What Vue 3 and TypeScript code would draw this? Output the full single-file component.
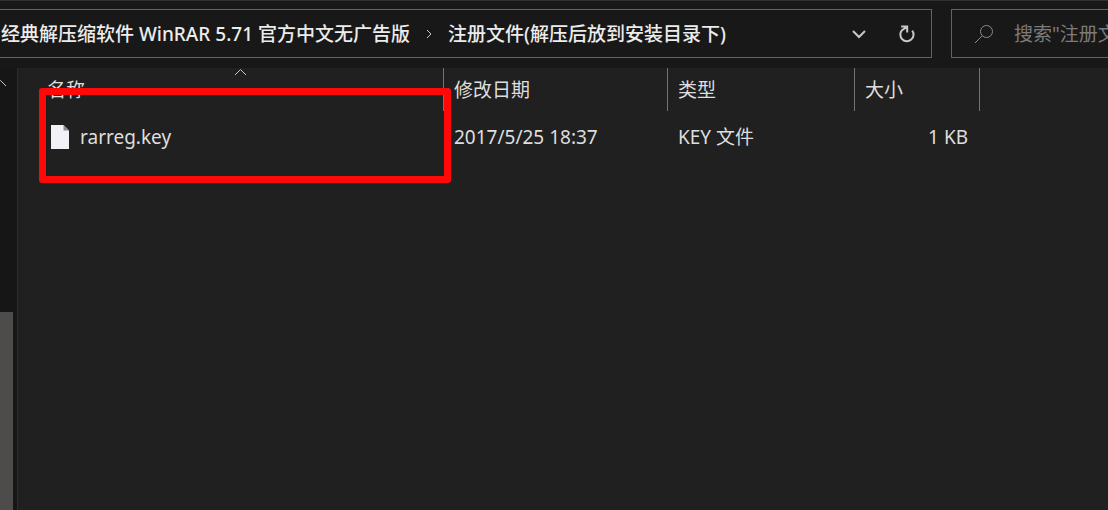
<script setup lang="ts">
import { ref } from 'vue'

interface FileEntry {
  name: string
  modified: string
  kind: string
  size: string
}

const crumbs = ['经典解压缩软件 WinRAR 5.71 官方中文无广告版', '注册文件(解压后放到安装目录下)']
const query = ref('')
const files: FileEntry[] = [
  { name: 'rarreg.key', modified: '2017/5/25 18:37', kind: 'KEY 文件', size: '1 KB' },
]
</script>

<template>
  <div class="explorer">
    <header class="toolbar">
      <nav class="address" aria-label="地址">
        <a class="crumb" href="#">{{ crumbs[0] }}</a>
        <svg class="crumb-sep" viewBox="0 0 8 12" aria-hidden="true"><path d="M2 2l4 4-4 4" /></svg>
        <a class="crumb" href="#">{{ crumbs[1] }}</a>
        <button class="tool history" type="button" aria-label="历史记录">
          <svg viewBox="0 0 16 10" width="16" height="10"><path d="M2 2l6 6 6-6" /></svg>
        </button>
        <button class="tool" type="button" aria-label="刷新">
          <svg viewBox="0 0 18 18" width="18" height="18">
            <path d="M14.200 5.600A6.600 6.600 0 1 1 4 5.200L8.500 2.200M3.200 1.500H9.200V7.500" />
          </svg>
        </button>
      </nav>
      <label class="search">
        <svg viewBox="0 0 20 20" width="20" height="20" aria-hidden="true">
          <circle cx="12.5" cy="7.5" r="6" /><path d="M8.2 11.8L1 19" />
        </svg>
        <input v-model="query" type="text" aria-label="搜索" placeholder="搜索&quot;注册文件(解压后放到安装目录下)&quot;">
      </label>
    </header>

    <div class="body">
      <aside class="tree">
        <button class="scroll-up" type="button" aria-label="向上滚动">
          <svg viewBox="0 0 13 8" width="13" height="8"><path d="M1 7l5.500-5.500L12 7" /></svg>
        </button>
        <div class="thumb"></div>
      </aside>
      <main class="listing">
        <table>
          <colgroup>
            <col class="c-name"><col class="c-date"><col class="c-kind"><col class="c-size"><col>
          </colgroup>
          <thead>
            <tr>
              <th class="name">
                名称
                <svg class="sort" viewBox="0 0 13 8" width="13" height="8" aria-hidden="true"><path d="M1 7l5.500-5.500L12 7" /></svg>
              </th>
              <th>修改日期</th>
              <th>类型</th>
              <th>大小</th>
              <td></td>
            </tr>
          </thead>
          <tbody>
            <tr v-for="file in files" :key="file.name">
              <td class="name">
                <span class="file">
                  <svg viewBox="0 0 18 24" width="18" height="24" aria-hidden="true">
                    <path class="sheet" d="M0 0H12.500L18 5.500V24H0Z" /><path class="fold" d="M12.500 0V5.500H18Z" />
                  </svg>
                  {{ file.name }}
                </span>
              </td>
              <td>{{ file.modified }}</td>
              <td>{{ file.kind }}</td>
              <td class="size">{{ file.size }}</td>
              <td></td>
            </tr>
          </tbody>
        </table>
        <div class="highlight"></div>
      </main>
    </div>
  </div>
</template>

<style>
body {
  margin: 0;
  background: #212020;
}
</style>

<style scoped>
.explorer {
  display: flex;
  flex-direction: column;
  min-height: 100vh;
  overflow: hidden;
  box-sizing: border-box;
  border-top: 1px solid #30302e;
  background: #212020;
  color: #dedede;
  font: 19px/24px "Noto Sans", "Noto Sans CJK SC", sans-serif;
}
svg {
  flex: none;
  fill: none;
  stroke: #c8c8c8;
  stroke-width: 2;
}
button {
  display: grid;
  place-items: center;
  padding: 0;
  border: 0;
  background: none;
}
.toolbar {
  display: flex;
  gap: 19px;
  padding: 8px 0 10px;
  background: #191818;
}
.address,
.search {
  display: flex;
  align-items: center;
  box-sizing: border-box;
  height: 49px;
  border: 1px solid #62625f;
}
.address {
  flex: 1;
  min-width: 0;
  padding-left: 1px;
  border-left: 0;
}
.crumb {
  color: #ececec;
  font-weight: 500;
  text-decoration: none;
  white-space: nowrap;
}
.crumb-sep {
  width: 8px;
  height: 12px;
  margin: 0 15px;
  stroke-width: 1;
}
.tool {
  width: 48px;
  height: 46px;
}
.history {
  margin-left: auto;
}
.search {
  gap: 20px;
  width: 157px;
  padding-left: 22px;
  border-right: 0;
}
.search svg {
  stroke: #8a8a88;
  stroke-width: 1;
}
.search input {
  flex: 1;
  min-width: 0;
  padding: 0;
  border: 0;
  outline: 0;
  background: none;
  color: #dedede;
  font: inherit;
}
.search input::placeholder {
  color: #7c7b79;
  opacity: 1;
}
.body {
  display: flex;
  flex: 1;
}
.tree {
  display: flex;
  flex-direction: column;
  width: 17px;
  border-right: 1px solid #2e2e2e;
  background: #171616;
}
.scroll-up {
  width: 13px;
  height: 30px;
  margin-left: -6px;
}
.scroll-up svg,
.sort {
  stroke-width: 1;
}
.thumb {
  flex: 1;
  width: 13px;
  margin-top: 214px;
  background: #4d4c4a;
}
.listing {
  position: relative;
  flex: 1;
  min-width: 0;
}
table {
  width: 100%;
  table-layout: fixed;
  border-collapse: separate;
  border-spacing: 0;
}
.c-name {
  width: 426px;
}
.c-date {
  width: 224px;
}
.c-kind {
  width: 187px;
}
.c-size {
  width: 125px;
}
th,
td {
  box-sizing: border-box;
  padding: 0 12px 0 10px;
  text-align: left;
  font-weight: 400;
  white-space: nowrap;
}
th {
  position: relative;
  height: 43px;
  border-right: 1px solid #74736f;
}
tbody td {
  height: 52px;
}
th.name {
  padding-left: 29px;
}
td.name {
  padding-left: 33px;
}
td.size {
  text-align: right;
}
.sort {
  position: absolute;
  top: 0;
  left: 216px;
}
.file {
  display: flex;
  align-items: center;
  gap: 11px;
}
.file .sheet {
  fill: #f2f2f6;
  stroke: none;
}
.file .fold {
  fill: #8b8b8f;
  stroke: none;
}
.highlight {
  position: absolute;
  top: 20px;
  left: 21px;
  box-sizing: border-box;
  width: 412px;
  height: 95px;
  border: 7px solid #fd0a08;
  border-radius: 3px;
  pointer-events: none;
}
</style>
